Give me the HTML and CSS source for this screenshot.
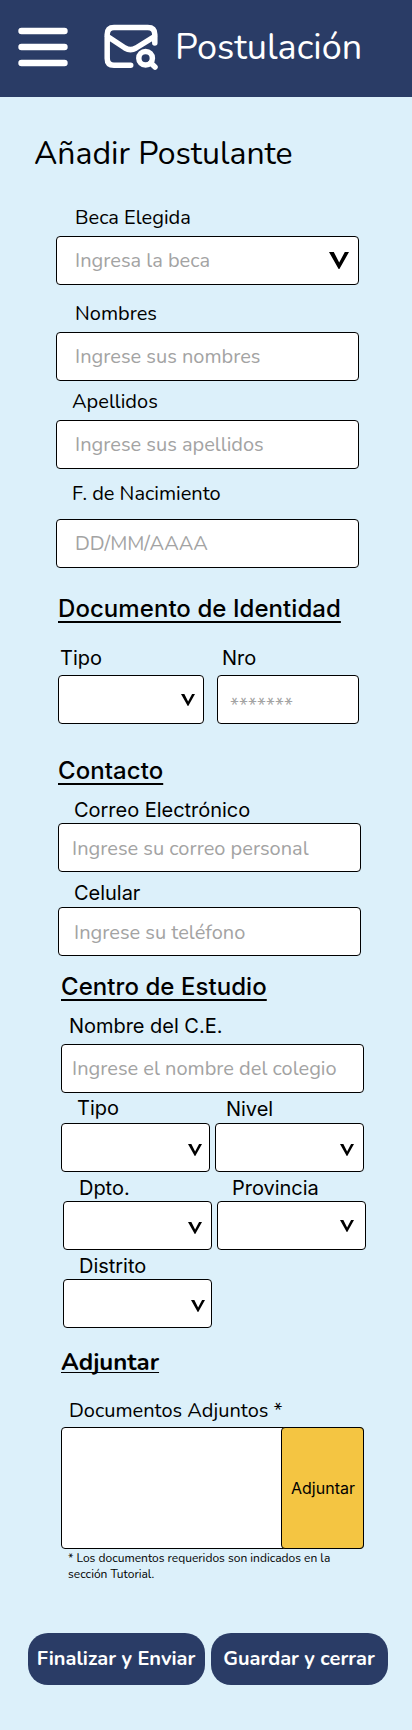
FILE: index.html
```
<!DOCTYPE html>
<html lang="es">
<head>
<meta charset="utf-8">
<title>Postulación</title>
<link rel="stylesheet" href="styles.css">
</head>
<body>
<svg width="0" height="0" class="defs"><symbol id="v" viewBox="0 0 20 17"><path d="M0 0H4.8L10.2 10.6L15.800 0H20L10.4 17H9.6Z"/></symbol></svg>
<header class="bar">
  <svg class="menu" width="50" height="40" viewBox="0 0 50 40"><path d="M3.500 4H46.500M3.500 20H46.500M3.500 36H46.500"/></svg>
  <svg class="mail" width="56" height="48" viewBox="0 0 56 48"><path d="M27.7 41.2H11Q4.200 41.2 4.200 34.4V10.500Q4.200 3.500 11 3.500H44.800Q51.800 3.500 51.800 10.500V19M4.200 12.300L22 24Q27.500 27.200 33 24L51.800 12.300M47.800 39L52 43"/><circle cx="42.600" cy="34.200" r="6.800"/></svg>
  <h1 class="brand">Postulación</h1>
</header>
<main class="form">
  <h2 class="title">Añadir Postulante</h2>
  <section class="personal">
    <div class="label beca-label">Beca Elegida</div>
    <div class="box"><span class="hint">Ingresa la beca</span><svg class="v big"><use href="#v"/></svg></div>
    <div class="label nombres-label">Nombres</div>
    <div class="box"><span class="hint">Ingrese sus nombres</span></div>
    <div class="label apellidos-label">Apellidos</div>
    <div class="box"><span class="hint">Ingrese sus apellidos</span></div>
    <div class="label fecha-label">F. de Nacimiento</div>
    <div class="box"><span class="hint">DD/MM/AAAA</span></div>
  </section>
  <section class="identity">
    <h3 class="heading">Documento de Identidad</h3>
    <div class="pair identity-pair">
      <div><div class="label inter">Tipo</div><div class="box"><svg class="v"><use href="#v"/></svg></div></div>
      <div><div class="label inter">Nro</div><div class="box"><span class="hint stars">*******</span></div></div>
    </div>
  </section>
  <section class="contact">
    <h3 class="heading">Contacto</h3>
    <div class="label inter correo-label">Correo Electrónico</div>
    <div class="box"><span class="hint correo-hint">Ingrese su correo personal</span></div>
    <div class="label inter celular-label">Celular</div>
    <div class="box"><span class="hint celular-hint">Ingrese su teléfono</span></div>
  </section>
  <section class="school">
    <h3 class="heading">Centro de Estudio</h3>
    <div class="label inter ce-label">Nombre del C.E.</div>
    <div class="box"><span class="hint ce-hint">Ingrese el nombre del colegio</span></div>
    <div class="pair kind-pair">
      <div><div class="label inter">Tipo</div><div class="box"><svg class="v"><use href="#v"/></svg></div></div>
      <div><div class="label inter nivel">Nivel</div><div class="box"><svg class="v"><use href="#v"/></svg></div></div>
    </div>
    <div class="pair place-pair">
      <div><div class="label inter">Dpto.</div><div class="box"><svg class="v dpto"><use href="#v"/></svg></div></div>
      <div><div class="label inter prov-label">Provincia</div><div class="box"><svg class="v prov"><use href="#v"/></svg></div></div>
      <div><div class="label inter">Distrito</div><div class="box"><svg class="v dist"><use href="#v"/></svg></div></div>
    </div>
  </section>
  <section class="attach">
    <h3 class="heading attach-heading">Adjuntar</h3>
    <div class="label docs-label">Documentos Adjuntos *</div>
    <div class="drop"><button class="pick">Adjuntar</button></div>
    <p class="note">* Los documentos requeridos son indicados en la<br>sección Tutorial.</p>
  </section>
  <div class="actions"><button class="cta">Finalizar y Enviar</button><button class="cta">Guardar y cerrar</button></div>
</main>
</body>
</html>
```
FILE: styles.css
```
* { box-sizing: border-box; margin: 0; padding: 0; }
body { width: 412px; height: 1730px; background: #dcf0fa; color: #000; font-family: Nunito, Lato, sans-serif; white-space: nowrap; }
.defs { display: block; }
.bar { height: 97px; background: #2a3c66; color: #fff; display: flex; align-items: flex-start; }
.menu { margin: 27px 0 0 18px; fill: none; stroke: #fff; stroke-width: 6.4; stroke-linecap: round; }
.mail { margin: 24px 0 0 35px; fill: none; stroke: #fff; stroke-width: 5.500; stroke-linecap: round; stroke-linejoin: round; }
.brand { margin: 26px 0 0 16px; font-size: 36px; line-height: 43px; font-weight: 380; }
.title { margin: 38px 0 0 34px; font-size: 32px; line-height: 38px; font-weight: 400; height: 38px; }
.label { font-size: 20px; line-height: 28px; height: 24px; }
.inter { font-family: Inter, sans-serif; line-height: 24px; letter-spacing: -0.03px; }
.box { height: 49px; border: 1px solid #000; border-radius: 4px; background: #fff; display: flex; align-items: flex-start; justify-content: space-between; }
.hint { font-size: 20px; line-height: 24px; margin: 12px 0 0 18px; color: #a3a3a3; }
.v { width: 14px; height: 12px; margin: 20px 7px 0 auto; flex: none; }
.v.big { width: 20px; height: 17px; margin: 15px 9px 0 auto; }
.personal { width: 303px; margin: 31px 0 0 56px; }
.personal .label { padding-left: 19px; }
.beca-label { margin-bottom: 8px; }
.nombres-label { margin: 15px 0 8px; }
.personal .apellidos-label, .personal .fecha-label { padding-left: 16px; }
.apellidos-label { margin: 7px 0 8px; }
.fecha-label { margin: 11px 0 15px; }
.heading { font: 500 24px/29px Inter, sans-serif; height: 29px; letter-spacing: 0.06px; text-decoration: underline; text-decoration-thickness: 1.5px; text-underline-offset: 4px; }
.identity { margin: 26px 0 0 58px; width: 301px; }
.pair { display: grid; }
.identity-pair { grid-template-columns: 146px 142px; gap: 13px; margin-top: 23px; }
.identity-pair .label { margin-bottom: 5px; padding-left: 2px; }
.identity-pair div + div > .label { padding-left: 5px; }
.identity-pair .v { margin: 18px 8px 0 auto; }
.stars { margin: 18px 0 0 12px; }
.contact { margin: 32px 0 0 58px; width: 303px; }
.correo-label { margin: 13px 0 1px; padding-left: 16px; }
.celular-label { margin: 9px 0 2px; padding-left: 16px; }
.correo-hint { margin-left: 13px; margin-top: 13px; }
.celular-hint { margin-left: 15px; margin-top: 13px; }
.school { margin: 16px 0 0 61px; width: 305px; }
.school > .box { width: 303px; }
.ce-label { margin: 13px 0 6px; padding-left: 8px; }
.ce-hint { margin-left: 10px; }
.kind-pair { grid-template-columns: 149px 149px; gap: 5px; margin-top: 3px; }
.kind-pair .label { padding-left: 16px; margin-bottom: 3px; }
.kind-pair .nivel { padding: 1px 0 0 11px; }
.kind-pair div + div > .box > .v { margin-right: 9px; }
.place-pair { grid-template-columns: 149px 149px; gap: 4px 5px; margin: 4px 0 0 2px; }
.place-pair .label { padding-left: 16px; margin-bottom: 1px; }
.place-pair .prov-label { padding-left: 15px; }
.v.dpto { margin-right: 9px; }
.v.prov { margin: 18px 11px 0 auto; }
.v.dist { margin-right: 6px; }
.attach { margin: 18px 0 0 61px; width: 303px; }
.attach-heading { font: 700 24px/33px Nunito, Lato, sans-serif; letter-spacing: 0; text-decoration-thickness: 1px; text-underline-offset: 2px; text-decoration-skip-ink: none; }
.docs-label { margin: 22px 0 6px; padding-left: 8px; }
.drop { height: 122px; border: 1px solid #000; border-radius: 4px; background: #fff; display: flex; justify-content: flex-end; }
.pick { width: 83px; height: 122px; margin: -1px -1px 0 0; border: 1px solid #000; border-radius: 4px; background: #f4c542; font: 16px/20px Inter, sans-serif; padding-left: 1px; color: #000; }
.note { font-size: 12px; line-height: 16px; margin: 1px 0 0 7px; }
.actions { display: grid; grid-template-columns: 177px 177px; gap: 6px; margin: 51px 0 0 28px; }
.cta { height: 52px; border: 0; border-radius: 20px; background: #2a3c66; color: #fff; font: 700 20px/24px Nunito, Lato, sans-serif; padding-right: 1px; }
```
